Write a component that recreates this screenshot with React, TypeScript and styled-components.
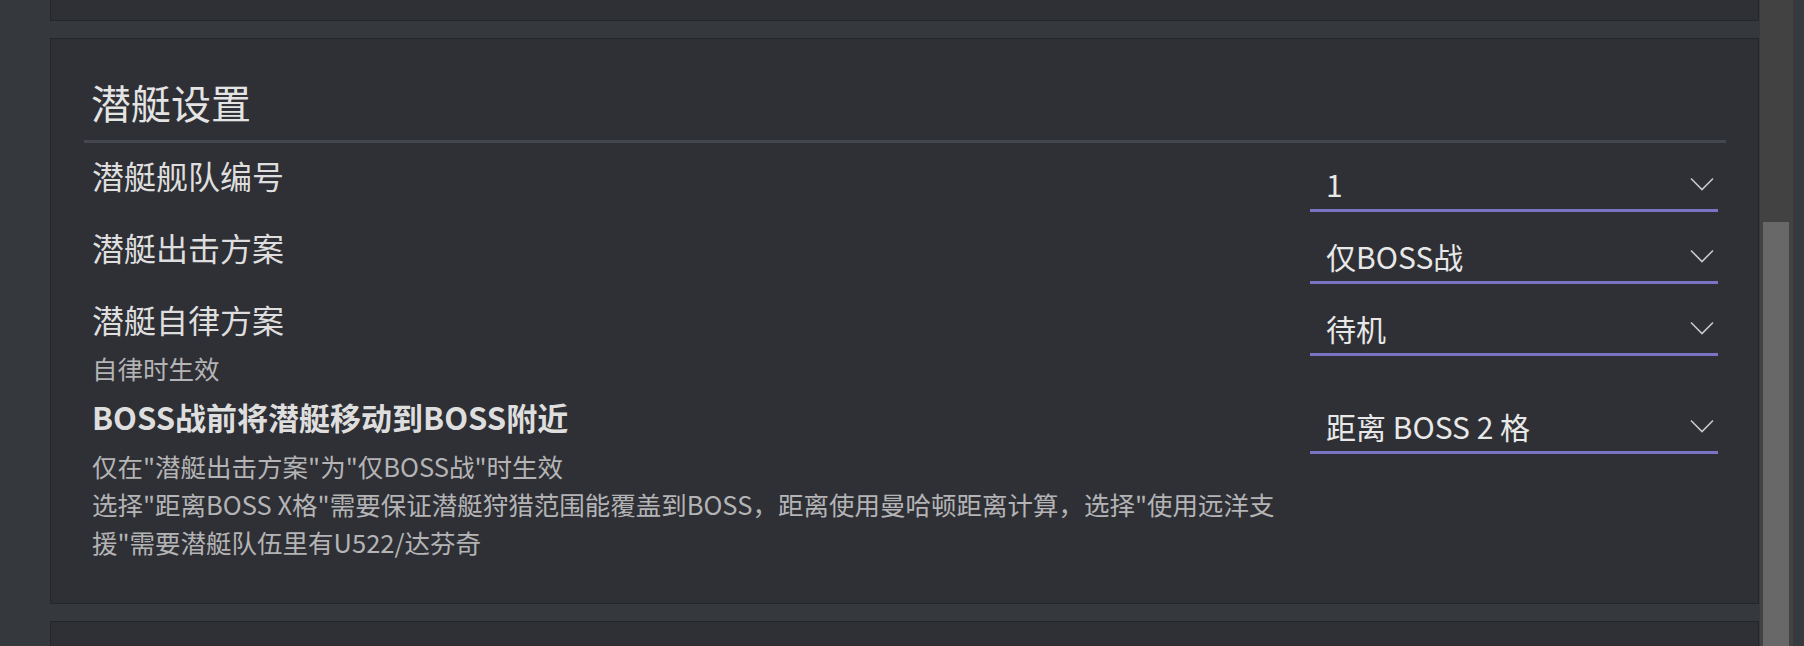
import styled, { createGlobalStyle } from "styled-components";

const GlobalStyle = createGlobalStyle`
  html, body {
    margin: 0;
    padding: 0;
    background: #35383d;
    overflow: hidden;
  }
  body {
    font-family: "Noto Sans CJK SC", "Noto Sans", sans-serif;
  }
`;

const Shell = styled.div`
  display: flex;
  height: 646px;
  overflow: hidden;
`;

const Main = styled.div`
  flex: 1;
  min-width: 0;
  display: flex;
  flex-direction: column;
  gap: 17px;
  padding: 0 1px 0 50px;
`;

const Card = styled.section<{ $stub?: "top" | "bottom" }>`
  background: #2f3035;
  border: 1px solid #25262a;
  box-sizing: border-box;
  ${(p) => p.$stub === "top" && "height: 21px; flex-shrink: 0; border-top: none;"}
  ${(p) => p.$stub === "bottom" && "flex: 1; border-bottom: none;"}
  ${(p) => !p.$stub && "padding: 39px 32px 32px 33px; flex-shrink: 0;"}
`;

const Title = styled.h2`
  margin: 0;
  padding: 0 7px;
  font-size: 40px;
  line-height: 48px;
  font-weight: 400;
  color: #e4e4e4;
`;

const Divider = styled.div`
  height: 3px;
  margin: 14px 0 12px;
  background: #44474d;
`;

const Row = styled.div`
  display: flex;
  align-items: flex-start;
  justify-content: space-between;
  gap: 24px;
  padding: 0 8px;
  margin-bottom: 10px;
`;

const LabelCol = styled.div`
  flex: 1;
  min-width: 0;
`;

const Label = styled.div<{ $strong?: boolean }>`
  font-size: ${(p) => (p.$strong ? 31 : 32)}px;
  line-height: 40px;
  color: #dedede;
  font-weight: ${(p) => (p.$strong ? 600 : 400)};
`;

const Help = styled.div`
  margin-top: 10px;
  max-width: 1195px;
  font-size: 25.5px;
  line-height: 38px;
  color: #b4b4b6;
`;

const Select = styled.div`
  flex: 0 0 408px;
  height: 57px;
  margin-bottom: 5px;
  box-sizing: border-box;
  display: flex;
  align-items: center;
  justify-content: space-between;
  padding: 3px 4px 0 16px;
  border-bottom: 3px solid #7b73c4;
  font-size: 30px;
  color: #e8e8e8;
`;

const Track = styled.div`
  width: 33px;
  flex-shrink: 0;
  display: flex;
  flex-direction: column;
  box-sizing: border-box;
  padding: 222px 4px 0 3px;
  background: #424242;
`;

const Thumb = styled.div`
  flex: 1;
  background: #686868;
`;

const Edge = styled.div`
  width: 11px;
  flex-shrink: 0;
  background: #36393e;
`;

const Chevron = () => (
  <svg width="24" height="14" viewBox="0 0 24 14" fill="none">
    <polyline points="1,1.5 12,12.5 23,1.5" stroke="#c9c9c9" strokeWidth="1.6" />
  </svg>
);

type Field = { label: string; value: string; help?: string[]; strong?: boolean };

const fields: Field[] = [
  { label: "潜艇舰队编号", value: "1" },
  { label: "潜艇出击方案", value: "仅BOSS战" },
  { label: "潜艇自律方案", value: "待机", help: ["自律时生效"] },
  {
    label: "BOSS战前将潜艇移动到BOSS附近",
    value: "距离 BOSS 2 格",
    strong: true,
    help: [
      "仅在\"潜艇出击方案\"为\"仅BOSS战\"时生效",
      "选择\"距离BOSS X格\"需要保证潜艇狩猎范围能覆盖到BOSS，距离使用曼哈顿距离计算，选择\"使用远洋支援\"需要潜艇队伍里有U522/达芬奇",
    ],
  },
];

const App = () => (
  <>
    <GlobalStyle />
    <Shell>
      <Main>
        <Card $stub="top" />
        <Card>
          <Title>潜艇设置</Title>
          <Divider />
          {fields.map((f) => (
            <Row key={f.label}>
              <LabelCol>
                <Label $strong={f.strong}>{f.label}</Label>
                {f.help && (
                  <Help>
                    {f.help.map((h, i) => (
                      <div key={i}>{h}</div>
                    ))}
                  </Help>
                )}
              </LabelCol>
              <Select>
                <span>{f.value}</span>
                <Chevron />
              </Select>
            </Row>
          ))}
        </Card>
        <Card $stub="bottom" />
      </Main>
      <Track>
        <Thumb />
      </Track>
      <Edge />
    </Shell>
  </>
);

export default App;
